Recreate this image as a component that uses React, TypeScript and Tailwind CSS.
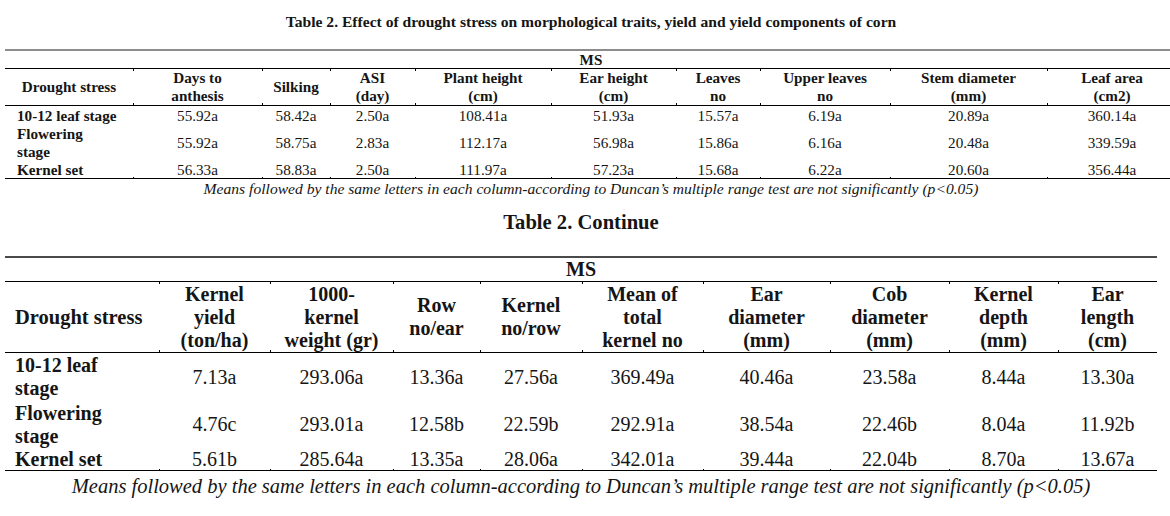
import React from "react";

const T1_GRID =
  "grid grid-cols-[128px_129px_68px_85px_136px_125px_84px_130px_157px_130px]";
const T2_GRID =
  "grid grid-cols-[154px_111px_123px_87px_102px_121px_127px_119px_109px_99px]";

const t1Head: React.ReactNode[] = [
  "Drought stress",
  <>Days to<br />anthesis</>,
  "Silking",
  <>ASI<br />(day)</>,
  <>Plant height<br />(cm)</>,
  <>Ear height<br />(cm)</>,
  <>Leaves<br />no</>,
  <>Upper leaves<br />no</>,
  <>Stem diameter<br />(mm)</>,
  <>Leaf area<br />(cm2)</>,
];

const t1Rows: { label: React.ReactNode; h: string; vals: string[] }[] = [
  {
    label: "10-12 leaf stage",
    h: "h-[19px]",
    vals: ["55.92a", "58.42a", "2.50a", "108.41a", "51.93a", "15.57a", "6.19a", "20.89a", "360.14a"],
  },
  {
    label: <>Flowering<br />stage</>,
    h: "h-[36px]",
    vals: ["55.92a", "58.75a", "2.83a", "112.17a", "56.98a", "15.86a", "6.16a", "20.48a", "339.59a"],
  },
  {
    label: "Kernel set",
    h: "h-[18px] border-b border-black",
    vals: ["56.33a", "58.83a", "2.50a", "111.97a", "57.23a", "15.68a", "6.22a", "20.60a", "356.44a"],
  },
];

const t2Head: React.ReactNode[] = [
  "Drought stress",
  <>Kernel<br />yield<br />(ton/ha)</>,
  <>1000-<br />kernel<br />weight (gr)</>,
  <>Row<br />no/ear</>,
  <>Kernel<br />no/row</>,
  <>Mean of<br />total<br />kernel no</>,
  <>Ear<br />diameter<br />(mm)</>,
  <>Cob<br />diameter<br />(mm)</>,
  <>Kernel<br />depth<br />(mm)</>,
  <>Ear<br />length<br />(cm)</>,
];

const t2Rows: { label: React.ReactNode; h: string; vals: string[] }[] = [
  {
    label: <>10-12 leaf<br />stage</>,
    h: "h-[48px]",
    vals: ["7.13a", "293.06a", "13.36a", "27.56a", "369.49a", "40.46a", "23.58a", "8.44a", "13.30a"],
  },
  {
    label: <>Flowering<br />stage</>,
    h: "h-[47px]",
    vals: ["4.76c", "293.01a", "12.58b", "22.59b", "292.91a", "38.54a", "22.46b", "8.04a", "11.92b"],
  },
  {
    label: "Kernel set",
    h: "h-[23px] border-b border-black",
    vals: ["5.61b", "285.64a", "13.35a", "28.06a", "342.01a", "39.44a", "22.04b", "8.70a", "13.67a"],
  },
];

const headTick =
  "relative flex items-center justify-center text-center font-bold before:absolute before:left-0 before:top-0 before:h-[2px] before:w-px before:bg-black after:absolute after:left-0 after:bottom-0 after:h-[2px] after:w-px after:bg-black";
const headFirst = "flex items-center justify-center text-center font-bold";
const cellPlain = "flex items-center justify-center text-center";
const cellBottomTick =
  "relative flex items-center justify-center text-center after:absolute after:left-0 after:bottom-0 after:h-[2px] after:w-px after:bg-black";

const footnote =
  "Means followed by the same letters in each column-according to Duncan\u2019s multiple range test are not significantly (p<0.05)";

export default function App() {
  return (
    <div className="w-[1170px] h-[516px] overflow-hidden bg-white text-[#151515] font-['Liberation_Serif',serif]">
      {/* Table 1 */}
      <div className="ml-[5px] w-[1172px] pt-[13px]">
        <div className="flex justify-center text-[15.6px] leading-[18px] font-bold whitespace-nowrap">
          Table 2. Effect of drought stress on morphological traits, yield and yield components of corn
        </div>
        <div className="mt-[18px] border-t-2 border-[#8c8c8c] text-[15.2px] leading-[18px]">
          <div className="flex h-[18px] items-center justify-center border-b border-black font-bold">
            MS
          </div>
          <div className={`${T1_GRID} h-[37px] border-b border-black`}>
            {t1Head.map((h, i) => (
              <div key={i} className={i === 0 ? headFirst : headTick}>
                {h}
              </div>
            ))}
          </div>
          {t1Rows.map((r, ri) => (
            <div key={ri} className={`${T1_GRID} ${r.h}`}>
              <div className="flex items-center pl-[12px] font-bold whitespace-nowrap">{r.label}</div>
              {r.vals.map((v, i) => (
                <div key={i} className={ri === 2 ? cellBottomTick : cellPlain}>
                  {v}
                </div>
              ))}
            </div>
          ))}
        </div>
        <div className="mt-[1px] flex justify-center text-[15.6px] leading-[18px] italic whitespace-nowrap">
          {footnote}
        </div>
      </div>

      {/* Table 2 continue */}
      <div className="ml-[5px] w-[1152px] mt-[12px]">
        <div className="flex justify-center text-[20.6px] leading-[24px] font-bold">
          Table 2. Continue
        </div>
        <div className="mt-[22px] border-t-2 border-[#4a4a4a] text-[20px] leading-[23px]">
          <div className="flex h-[24px] items-center justify-center border-b border-black font-bold">
            MS
          </div>
          <div className={`${T2_GRID} h-[71px] border-b border-black`}>
            {t2Head.map((h, i) => (
              <div
                key={i}
                className={i === 0 ? "flex items-center pl-[10px] font-bold text-[20.5px]" : headTick}
              >
                {h}
              </div>
            ))}
          </div>
          {t2Rows.map((r, ri) => (
            <div key={ri} className={`${T2_GRID} ${r.h}`}>
              <div className="flex items-center pl-[10px] font-bold">{r.label}</div>
              {r.vals.map((v, i) => (
                <div key={i} className={ri === 2 ? cellBottomTick : cellPlain}>
                  {v}
                </div>
              ))}
            </div>
          ))}
        </div>
        <div className="mt-[3px] flex justify-center text-[20.5px] leading-[24px] italic whitespace-nowrap">
          {footnote}
        </div>
      </div>
    </div>
  );
}
